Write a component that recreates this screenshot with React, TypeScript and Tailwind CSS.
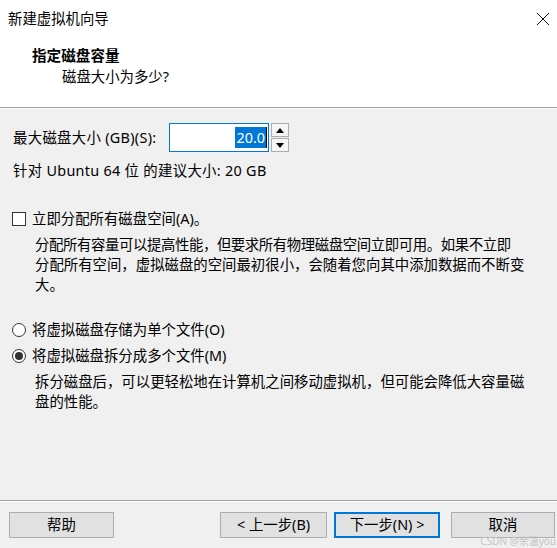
import React from "react";

const FONT = '"Noto Sans", "Noto Sans CJK SC", sans-serif';

function Btn({ children, def = false, className = "" }: { children: React.ReactNode; def?: boolean; className?: string }) {
  return (
    <div
      className={
        "h-[26px] flex items-center justify-center bg-[#e1e1e1] text-black text-[14.4px] leading-[20px] " +
        (def ? "border-2 border-[#0078d7] " : "border border-[#adadad] ") +
        className
      }
    >
      {children}
    </div>
  );
}

export default function App() {
  return (
    <div
      className="relative w-[557px] h-[548px] flex flex-col bg-[#f0f0f0] overflow-hidden text-black"
      style={{ fontFamily: FONT }}
    >
      {/* header */}
      <div className="h-[107px] bg-white flex flex-col">
        <div className="h-[37px] flex items-center justify-between pl-[8px] pr-[4px]">
          <span className="text-[14.4px] leading-[20px]">新建虚拟机向导</span>
          <svg width="14" height="14" viewBox="0 0 14 14" className="mr-[3px]">
            <path d="M1 1 L13 13 M13 1 L1 13" stroke="#111" strokeWidth="1" fill="none" />
          </svg>
        </div>
        <div className="mt-[8px] pl-[32px] text-[14.6px] leading-[20px] font-bold">指定磁盘容量</div>
        <div className="mt-[2px] pl-[62px] text-[14.4px] leading-[20px]">磁盘大小为多少?</div>
      </div>
      <div className="h-px bg-[#a0a0a0]" />
      <div className="h-px bg-white" />

      {/* content */}
      <div className="flex-1 flex flex-col text-[14.4px] leading-[20px]">
        <div className="mt-[14px] flex items-center pl-[13px]">
          <span className="w-[156px] tracking-[0.3px]">最大磁盘大小 (GB)(S):</span>
          <div className="w-[100px] h-[29px] border border-[#0078d7] bg-white flex items-center justify-end pr-[1px]">
            <span className="bg-[#0078d7] text-white h-[21px] flex items-center px-[1px]">20.0</span>
            <span className="w-px h-[21px] bg-black" />
          </div>
          <div className="ml-[2px] w-[18px] h-[29px] flex flex-col gap-px">
            <div className="h-[14px] border border-[#adadad] bg-[#f5f5f5] flex items-center justify-center">
              <svg width="8" height="5" viewBox="0 0 8 5">
                <path d="M0 5 L4 0 L8 5 Z" fill="#000" />
              </svg>
            </div>
            <div className="h-[14px] border border-[#adadad] bg-[#f5f5f5] flex items-center justify-center">
              <svg width="8" height="5" viewBox="0 0 8 5">
                <path d="M0 0 L8 0 L4 5 Z" fill="#000" />
              </svg>
            </div>
          </div>
        </div>

        <div className="mt-[9px] pl-[13px] tracking-[0.3px]">针对 Ubuntu 64 位 的建议大小: 20 GB</div>

        <div className="mt-[28px] flex items-center pl-[12px]">
          <span className="w-[14px] h-[14px] border border-[#333] bg-white" />
          <span className="ml-[6px]">立即分配所有磁盘空间(A)。</span>
        </div>
        <div className="mt-[6px] pl-[35px] whitespace-nowrap">
          <div className="tracking-[-0.4px]">分配所有容量可以提高性能，但要求所有物理磁盘空间立即可用。如果不立即</div>
          <div>分配所有空间，虚拟磁盘的空间最初很小，会随着您向其中添加数据而不断变</div>
          <div>大。</div>
        </div>

        <div className="mt-[25px] flex items-center pl-[12px]">
          <span className="w-[14px] h-[14px] rounded-full border border-[#333] bg-white" />
          <span className="ml-[6px]">将虚拟磁盘存储为单个文件(O)</span>
        </div>
        <div className="mt-[6px] flex items-center pl-[12px]">
          <span className="w-[14px] h-[14px] rounded-full border border-[#333] bg-white flex items-center justify-center">
            <span className="w-[8px] h-[8px] rounded-full bg-[#333]" />
          </span>
          <span className="ml-[6px]">将虚拟磁盘拆分成多个文件(M)</span>
        </div>
        <div className="mt-[6px] pl-[35px] whitespace-nowrap">
          <div>拆分磁盘后，可以更轻松地在计算机之间移动虚拟机，但可能会降低大容量磁</div>
          <div>盘的性能。</div>
        </div>
      </div>

      {/* footer */}
      <div className="h-px bg-[#a0a0a0]" />
      <div className="h-px bg-white" />
      <div className="pt-[10px] pb-[10px] flex items-center pl-[9px] pr-[2px]">
        <Btn className="w-[105px]">帮助</Btn>
        <div className="flex-1" />
        <Btn className="w-[107px]">&lt; 上一步(B)</Btn>
        <Btn def className="ml-[7px] w-[106px]">下一步(N) &gt;</Btn>
        <Btn className="ml-[11px] w-[104px]">取消</Btn>
      </div>

      <span className="absolute right-[1px] bottom-[2px] text-[10px] leading-[10px] text-[#c4c4c4]">
        CSDN @余温you
      </span>
    </div>
  );
}
